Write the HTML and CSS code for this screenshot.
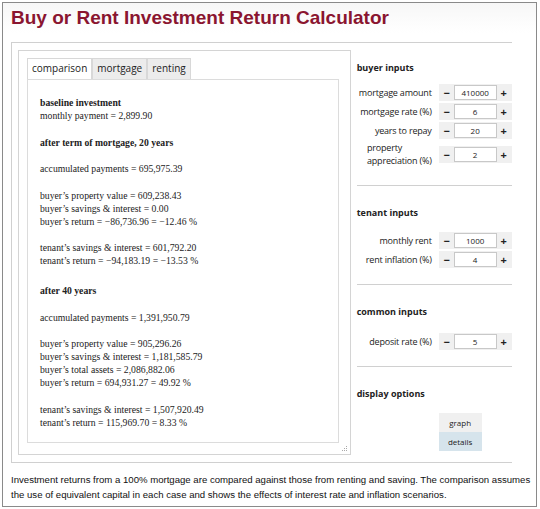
FILE: index.html
```html
<!DOCTYPE html>
<html>
<head>
<meta charset="utf-8">
<link rel="stylesheet" href="styles.css">
</head>
<body>
<div class="frame">
  <h1 class="title">Buy or Rent Investment Return Calculator</h1>
  <div class="main">
    <div class="left">
      <div class="tabs">
        <div class="tab active">comparison</div>
        <div class="tab">mortgage</div>
        <div class="tab">renting</div>
      </div>
      <div class="content">
        <p class="blk"><b>baseline investment</b><br>monthly payment = 2,899.90</p>
        <p class="blk"><b>after term of mortgage, 20 years</b></p>
        <p class="blk">accumulated payments = 695,975.39</p>
        <p class="blk">buyer’s property value = 609,238.43<br>buyer’s savings &amp; interest = 0.00<br>buyer’s return = −86,736.96 = −12.46 %</p>
        <p class="blk">tenant’s savings &amp; interest = 601,792.20<br>tenant’s return = −94,183.19 = −13.53 %</p>
        <p class="blk gap"><b>after 40 years</b></p>
        <p class="blk">accumulated payments = 1,391,950.79</p>
        <p class="blk">buyer’s property value = 905,296.26<br>buyer’s savings &amp; interest = 1,181,585.79<br>buyer’s total assets = 2,086,882.06<br>buyer’s return = 694,931.27 = 49.92 %</p>
        <p class="blk">tenant’s savings &amp; interest = 1,507,920.49<br>tenant’s return = 115,969.70 = 8.33 %</p>
      </div>
      <svg class="grip" width="7" height="7" viewBox="0 0 7 7"><g fill="#aaa"><rect x="5" y="1" width="1" height="1"/><rect x="3" y="3" width="1" height="1"/><rect x="5" y="3" width="1" height="1"/><rect x="1" y="5" width="1" height="1"/><rect x="3" y="5" width="1" height="1"/><rect x="5" y="5" width="1" height="1"/></g></svg>
    </div>
    <div class="right">
      <div class="section first">
        <div class="heading">buyer inputs</div>
        <div class="rows">
          <div class="row"><div class="label"><span>mortgage amount</span></div><div class="ctrl"><span class="btn">−</span><span class="inp">410000</span><span class="btn">+</span></div></div>
          <div class="row"><div class="label"><span>mortgage rate (%)</span></div><div class="ctrl"><span class="btn">−</span><span class="inp">6</span><span class="btn">+</span></div></div>
          <div class="row"><div class="label"><span>years to repay</span></div><div class="ctrl"><span class="btn">−</span><span class="inp">20</span><span class="btn">+</span></div></div>
          <div class="row"><div class="label"><span class="two">property<br>appreciation (%)</span></div><div class="ctrl"><span class="btn">−</span><span class="inp">2</span><span class="btn">+</span></div></div>
        </div>
      </div>
      <div class="section">
        <div class="heading">tenant inputs</div>
        <div class="rows">
          <div class="row"><div class="label"><span>monthly rent</span></div><div class="ctrl"><span class="btn">−</span><span class="inp">1000</span><span class="btn">+</span></div></div>
          <div class="row"><div class="label"><span>rent inflation (%)</span></div><div class="ctrl"><span class="btn">−</span><span class="inp">4</span><span class="btn">+</span></div></div>
        </div>
      </div>
      <div class="section common">
        <div class="heading">common inputs</div>
        <div class="rows">
          <div class="row"><div class="label"><span>deposit rate (%)</span></div><div class="ctrl"><span class="btn">−</span><span class="inp">5</span><span class="btn">+</span></div></div>
        </div>
      </div>
      <div class="section last">
        <div class="heading">display options</div>
        <div class="opts">
          <div class="opt">graph</div>
          <div class="opt sel">details</div>
        </div>
      </div>
    </div>
  </div>
  <p class="foot">Investment returns from a 100% mortgage are compared against those from renting and saving. The comparison assumes the use of equivalent capital in each case and shows the effects of interest rate and inflation scenarios.</p>
</div>
</body>
</html>
```

FILE: styles.css
```css
* { box-sizing: border-box; }
html, body { margin: 0; padding: 0; background: #fff; }
body { padding: 2px; }
.frame {
  width: 535px;
  height: 505px;
  border: 1.5px solid #8a8a8a;
  padding: 0 0 0 8px;
  background: linear-gradient(#f7f7f7 0, #fff 30px);
}
.title {
  margin: 0;
  padding-top: 3px;
  height: 39px;
  font-family: "Liberation Sans", Arial, sans-serif;
  font-size: 19px;
  font-weight: bold;
  color: #8a1530;
  line-height: 24px;
}
.main {
  width: 501px;
  height: 421px;
  border-top: 1px solid #d0d0d0;
  border-left: 1px solid #d0d0d0;
  border-bottom: 1px solid #d0d0d0;
  display: flex;
  padding: 7px 0 0 6px;
  background: #fff;
}
.left {
  position: relative;
  width: 334px;
  height: 405px;
  border: 1px solid #d4d4d4;
  padding: 7px 0 0 8px;
}
.grip { position: absolute; right: 2px; bottom: 2px; }
.tabs { display: flex; height: 21px; }
.tab {
  font-family: "Open Sans", "Segoe UI", sans-serif;
  font-size: 10px;
  color: #222;
  line-height: 19px;
  padding: 0 4px;
  background: #ececec;
  border: 1px solid #d8d8d8;
  border-bottom: none;
}
.tab.active { background: #fff; height: 21px; margin-bottom: -1px; position: relative; z-index: 1; }
.content {
  width: 312px;
  height: 364px;
  border: 1px solid #dcdcdc;
  padding: 16px 0 0 12px;
  font-family: "Liberation Serif", "Times New Roman", serif;
  font-size: 9.7px;
  line-height: 13px;
  color: #222;
}
.blk { margin: 0 0 13.5px 0; }
.blk.gap { margin-top: 17px; }
.right {
  width: 156px;
  margin-left: 6px;
  font-family: "Open Sans", "Segoe UI", sans-serif;
  font-size: 9px;
  color: #222;
}
.section { border-bottom: 1px solid #d0d0d0; padding: 20px 0 16px 0; }
.section.first { padding-top: 11px; padding-bottom: 18px; }
.section.first .heading { margin-bottom: 9px; }
.section.common .heading { margin-bottom: 14px; }
.section.last { border-bottom: none; }
.heading { font-weight: bold; font-size: 9px; line-height: 14px; margin-bottom: 12px; }
.rows { display: flex; flex-direction: column; gap: 2px; }
.row { display: flex; align-items: center; }
.label { width: 75px; display: flex; justify-content: flex-end; line-height: 13px; white-space: nowrap; letter-spacing: -0.2px; }
.label .two { text-align: left; }
.ctrl {
  margin-left: 7px;
  display: flex;
  align-items: center;
  background: #f0f0f0;
  padding: 1px 1px;
  height: 17px;
}
.btn {
  width: 14px;
  text-align: center;
  font-weight: bold;
  font-size: 11px;
  line-height: 15px;
}
.inp {
  width: 43px;
  height: 15px;
  background: #fff;
  border: 1px solid #c8c8c8;
  text-align: center;
  font-size: 8px;
  line-height: 13px;
}
.opts { display: flex; flex-direction: column; align-items: flex-start; padding-left: 82px; margin-top: 3px; }
.opt {
  width: 43px;
  height: 19px;
  line-height: 19px;
  text-align: center;
  font-size: 8px;
  background: #f0f0f0;
}
.opt.sel { background: #d6e4ec; }
.foot {
  margin: 9px 0 0 0;
  font-family: "Liberation Sans", Arial, sans-serif;
  font-size: 9.6px;
  line-height: 15px;
  color: #111;
}
```
